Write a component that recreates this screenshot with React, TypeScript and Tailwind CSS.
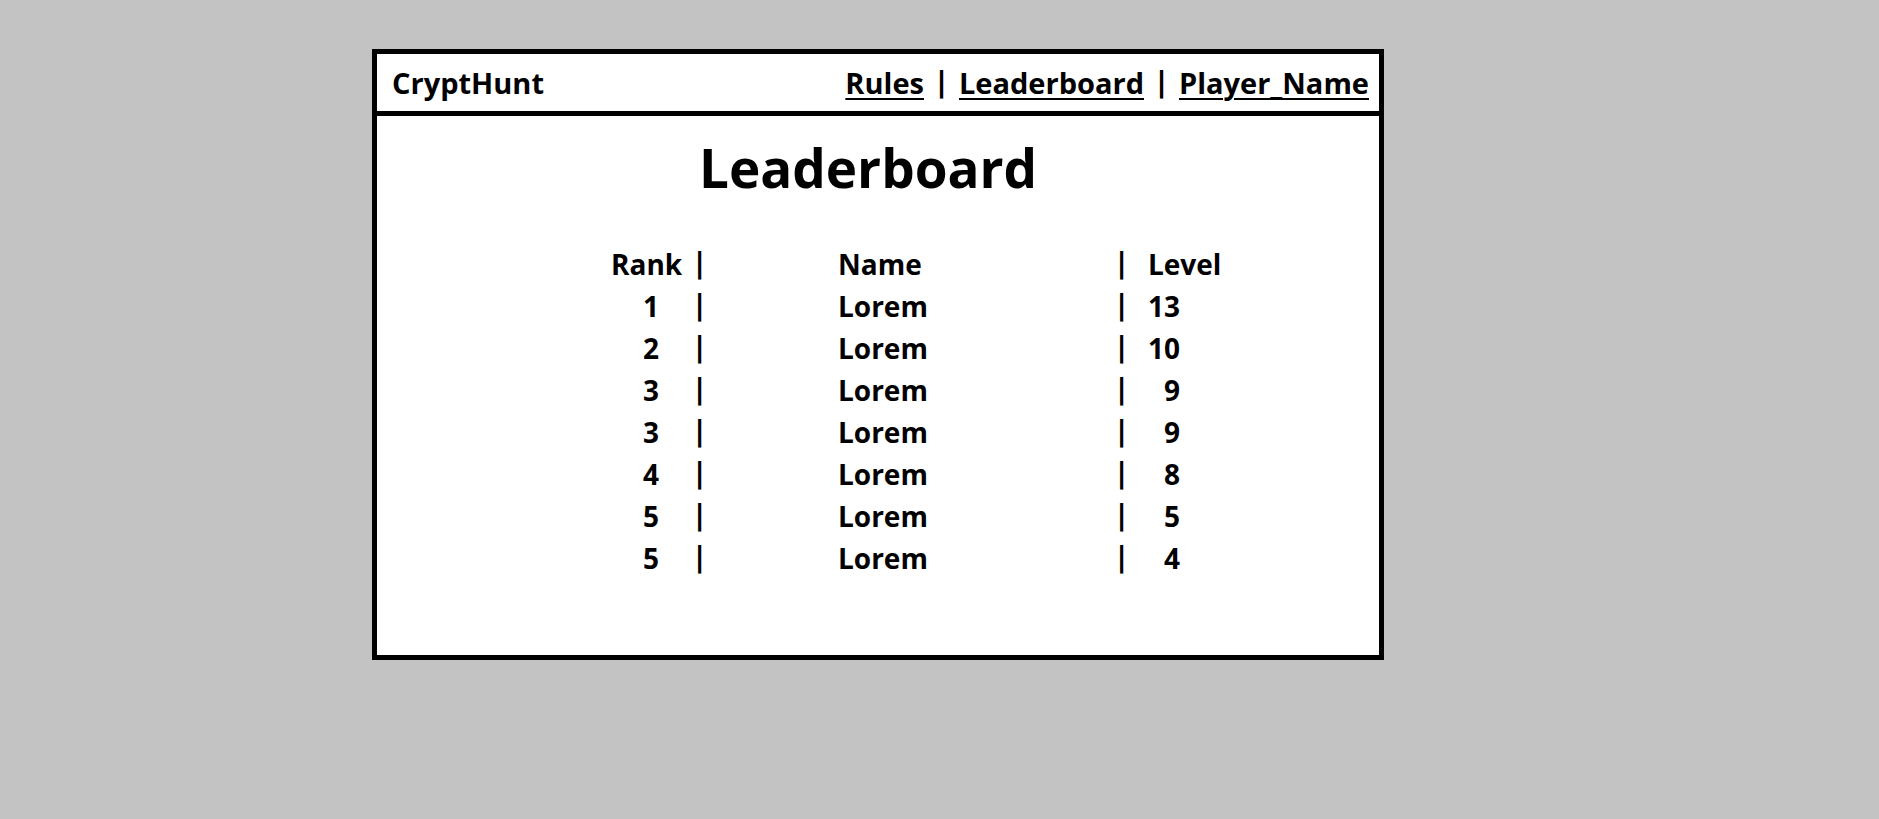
import React from "react";

const rows: [string, string, string][] = [
  ["1", "Lorem", "13"],
  ["2", "Lorem", "10"],
  ["3", "Lorem", "9"],
  ["3", "Lorem", "9"],
  ["4", "Lorem", "8"],
  ["5", "Lorem", "5"],
  ["5", "Lorem", "4"],
];

function Pipe({ className = "" }: { className?: string }) {
  return (
    <span
      className={`inline-flex w-[5px] justify-center font-bold ${className}`}
      style={{ fontFamily: '"DejaVu Sans", sans-serif' }}
    >
      |
    </span>
  );
}

export default function App() {
  const font = { fontFamily: '"Open Sans", Lato, sans-serif' };
  return (
    <div className="min-h-screen w-full bg-[#c3c3c3] pt-[49px] pl-[372px]" style={font}>
      <div className="flex h-[611px] w-[1012px] flex-col border-[5px] border-black bg-white text-black">
        <header className="flex h-[62px] shrink-0 items-center justify-between border-b-[5px] border-black pl-[15px] pr-[10px]">
          <div className="text-[29px] font-bold leading-none">CryptHunt</div>
          <nav className="flex items-center gap-[15px] text-[29px] font-bold leading-none">
            <a className="underline decoration-2 underline-offset-[4px]">Rules</a>
            <Pipe className="text-[29px] leading-none" />
            <a className="underline decoration-2 underline-offset-[4px]">Leaderboard</a>
            <Pipe className="text-[29px] leading-none" />
            <a className="underline decoration-2 underline-offset-[4px]">Player_Name</a>
          </nav>
        </header>
        <main className="flex flex-col">
          <h1 className="mt-[25px] pl-[322px] text-[53px] font-bold leading-none">Leaderboard</h1>
          <div className="mt-[49px] flex flex-col pl-[234px] text-[28px] font-bold leading-[42px]">
            <div className="flex">
              <div className="w-[86px]">Rank</div>
              <Pipe className="text-[28px]" />
              <div className="w-[417px] pl-[136px]">Name</div>
              <Pipe className="text-[28px]" />
              <div className="pl-[24px]">Level</div>
            </div>
            {rows.map(([rank, name, level], i) => (
              <div key={i} className="flex">
                <div className="w-[86px]">
                  <span className="inline-block w-[80px] text-center">{rank}</span>
                </div>
                <Pipe className="text-[28px]" />
                <div className="w-[417px] pl-[136px]">{name}</div>
                <Pipe className="text-[28px]" />
                <div className="pl-[22px]">
                  <span className="inline-block w-[34px] text-right">{level}</span>
                </div>
              </div>
            ))}
          </div>
        </main>
      </div>
    </div>
  );
}
